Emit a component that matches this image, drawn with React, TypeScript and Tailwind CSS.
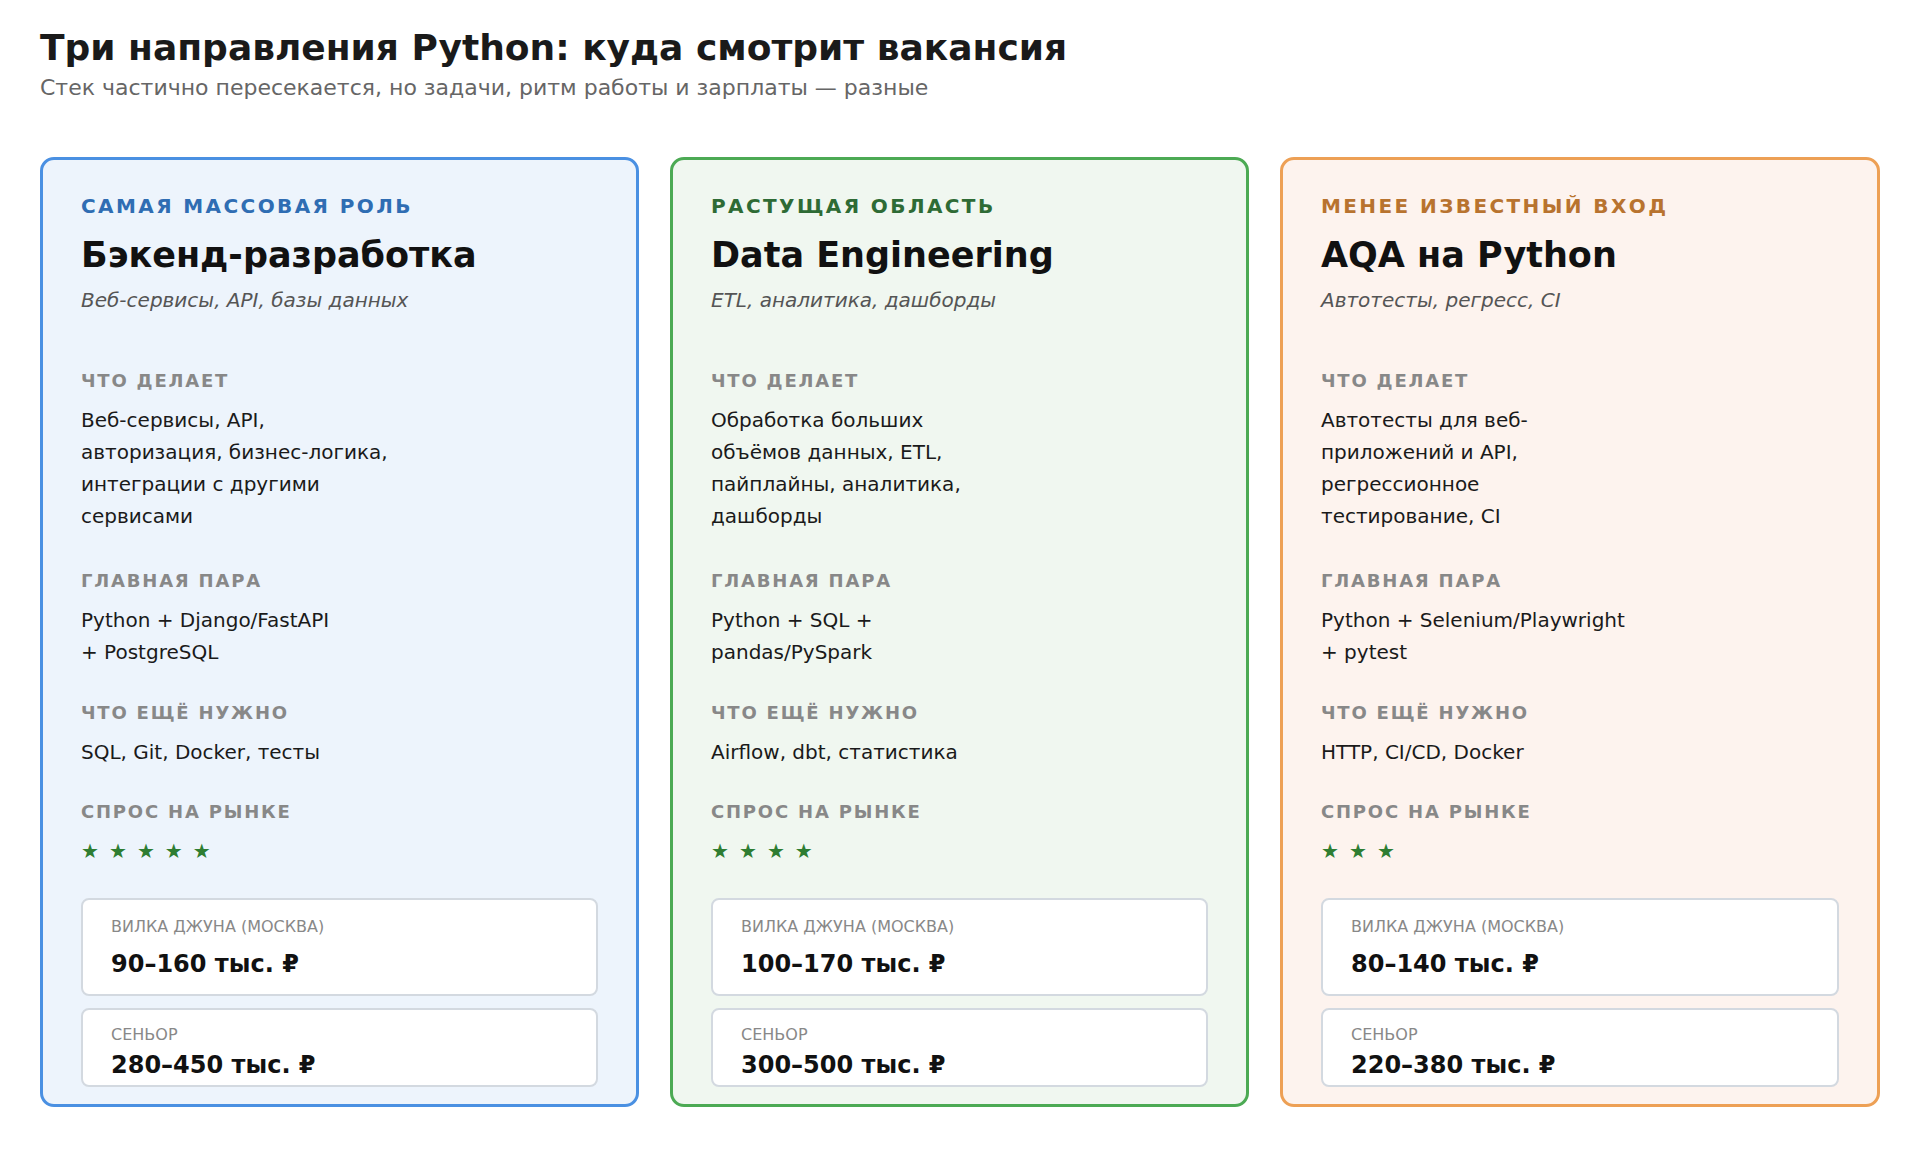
const cards = [
  {
    w: "w-[599px]",
    border: "border-[#4a90e2]",
    bg: "bg-[#edf4fc]",
    tag: "text-[#2f6db3]",
    label: "САМАЯ МАССОВАЯ РОЛЬ",
    title: "Бэкенд-разработка",
    sub: "Веб-сервисы, API, базы данных",
    does: ["Веб-сервисы, API,", "авторизация, бизнес-логика,", "интеграции с другими", "сервисами"],
    pair: ["Python + Django/FastAPI", "+ PostgreSQL"],
    more: "SQL, Git, Docker, тесты",
    stars: 5,
    junior: "90–160 тыс. ₽",
    senior: "280–450 тыс. ₽",
  },
  {
    w: "w-[579px]",
    border: "border-[#4caa54]",
    bg: "bg-[#f0f7f0]",
    tag: "text-[#2e6b35]",
    label: "РАСТУЩАЯ ОБЛАСТЬ",
    title: "Data Engineering",
    sub: "ETL, аналитика, дашборды",
    does: ["Обработка больших", "объёмов данных, ETL,", "пайплайны, аналитика,", "дашборды"],
    pair: ["Python + SQL +", "pandas/PySpark"],
    more: "Airflow, dbt, статистика",
    stars: 4,
    junior: "100–170 тыс. ₽",
    senior: "300–500 тыс. ₽",
  },
  {
    w: "w-[600px]",
    border: "border-[#eda055]",
    bg: "bg-[#fdf3ee]",
    tag: "text-[#b8732f]",
    label: "МЕНЕЕ ИЗВЕСТНЫЙ ВХОД",
    title: "AQA на Python",
    sub: "Автотесты, регресс, CI",
    does: ["Автотесты для веб-", "приложений и API,", "регрессионное", "тестирование, CI"],
    pair: ["Python + Selenium/Playwright", "+ pytest"],
    more: "HTTP, CI/CD, Docker",
    stars: 3,
    junior: "80–140 тыс. ₽",
    senior: "220–380 тыс. ₽",
  },
];

const Label = ({ children, className = "" }: { children: React.ReactNode; className?: string }) => (
  <div className={`text-[18px] leading-[24px] font-bold tracking-[0.1em] text-[#888888] ${className}`}>{children}</div>
);

const Lines = ({ lines }: { lines: string[] }) => (
  <div className="mt-[11px] text-[20px] leading-[32px] text-[#1a1a1a]">
    {lines.map((l) => (
      <div key={l}>{l}</div>
    ))}
  </div>
);

export default function App() {
  return (
    <div className="min-h-[1160px] bg-white px-[40px] pt-[24px] font-[DejaVu_Sans,Verdana,sans-serif]">
      <h1 className="text-[36px] leading-[48px] font-bold text-[#1a1a1a]">
        Три направления Python: куда смотрит вакансия
      </h1>
      <p className="text-[22px] leading-[32px] text-[#666666]">
        Стек частично пересекается, но задачи, ритм работы и зарплаты — разные
      </p>

      <div className="mt-[53px] flex gap-[31px]">
        {cards.map((c) => (
          <div
            key={c.title}
            className={`${c.w} ${c.border} ${c.bg} rounded-[14px] border-[3px] px-[38px] pt-[32px] pb-[17px]`}
          >
            <div className={`text-[20px] leading-[28px] font-bold tracking-[0.12em] ${c.tag}`}>{c.label}</div>
            <div className="mt-[13px] text-[35px] leading-[44px] font-bold text-[#111111]">{c.title}</div>
            <div className="mt-[9px] text-[20px] leading-[28px] italic text-[#555555]">{c.sub}</div>

            <Label className="mt-[55px]">ЧТО ДЕЛАЕТ</Label>
            <Lines lines={c.does} />

            <Label className="mt-[37px]">ГЛАВНАЯ ПАРА</Label>
            <Lines lines={c.pair} />

            <Label className="mt-[33px]">ЧТО ЕЩЁ НУЖНО</Label>
            <Lines lines={[c.more]} />

            <Label className="mt-[32px]">СПРОС НА РЫНКЕ</Label>
            <div className="mt-[15px] flex gap-[10px] text-[20px] leading-[24px] text-[#2e7d32]">
              {Array.from({ length: c.stars }).map((_, i) => (
                <span key={i}>★</span>
              ))}
            </div>

            <div className="mt-[35px] rounded-[8px] border-2 border-[#d3d9e0] bg-white px-[28px] pt-[17px] pb-[14px]">
              <div className="text-[16px] leading-[20px] text-[#888888]">ВИЛКА ДЖУНА (МОСКВА)</div>
              <div className="mt-[11px] text-[24px] leading-[32px] font-bold text-[#111111]">{c.junior}</div>
            </div>
            <div className="mt-[12px] rounded-[8px] border-2 border-[#d3d9e0] bg-white px-[28px] pt-[15px] pb-[6px]">
              <div className="text-[16px] leading-[20px] text-[#888888]">СЕНЬОР</div>
              <div className="mt-[6px] text-[24px] leading-[28px] font-bold text-[#111111]">{c.senior}</div>
            </div>
          </div>
        ))}
      </div>
    </div>
  );
}
